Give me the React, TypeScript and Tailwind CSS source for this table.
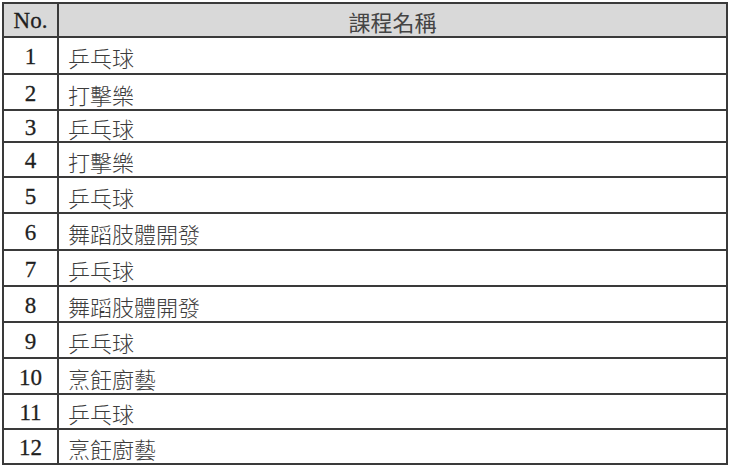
import React from "react";

const rows: { no: number; name: string; h: number }[] = [
  { no: 1, name: "乒乓球", h: 37 },
  { no: 2, name: "打擊樂", h: 36 },
  { no: 3, name: "乒乓球", h: 32 },
  { no: 4, name: "打擊樂", h: 35 },
  { no: 5, name: "乒乓球", h: 36 },
  { no: 6, name: "舞蹈肢體開發", h: 37 },
  { no: 7, name: "乒乓球", h: 36 },
  { no: 8, name: "舞蹈肢體開發", h: 36 },
  { no: 9, name: "乒乓球", h: 36 },
  { no: 10, name: "烹飪廚藝", h: 36 },
  { no: 11, name: "乒乓球", h: 35 },
  { no: 12, name: "烹飪廚藝", h: 35 },
];

export default function App() {
  return (
    <div className="w-[730px] h-[467px] bg-white pt-[2px] pl-[2px]">
      <table className="table-fixed border-collapse w-[726px] font-['Liberation_Serif','Noto_Sans_CJK_TC',serif] text-[#1f1f1f]">
        <colgroup>
          <col className="w-[55px]" />
          <col />
        </colgroup>
        <thead>
          <tr className="h-[34px] bg-[#d9d9d9]">
            <th className="border-2 border-[#3a3a3a] text-[23px] font-normal leading-none p-0 text-center [-webkit-text-stroke:0.3px_#1f1f1f]">
              No.
            </th>
            <th className="border-2 border-[#3a3a3a] text-[22px] font-normal leading-none p-0 pt-[2px] text-center font-['Noto_Sans_CJK_TC',sans-serif] text-[#444]">
              課程名稱
            </th>
          </tr>
        </thead>
        <tbody>
          {rows.map((r) => (
            <tr key={r.no} style={{ height: r.h }}>
              <td className="border-2 border-[#3a3a3a] text-[23px] leading-none p-0 pt-[2px] text-center [-webkit-text-stroke:0.3px_#1f1f1f]">
                {r.no}
              </td>
              <td className="border-2 border-[#3a3a3a] text-[22px] leading-none p-0 pt-[3px] pl-[9px] text-left font-['Noto_Sans_CJK_TC',sans-serif] font-light text-[#3c3c3c]">
                {r.name}
              </td>
            </tr>
          ))}
        </tbody>
      </table>
    </div>
  );
}
